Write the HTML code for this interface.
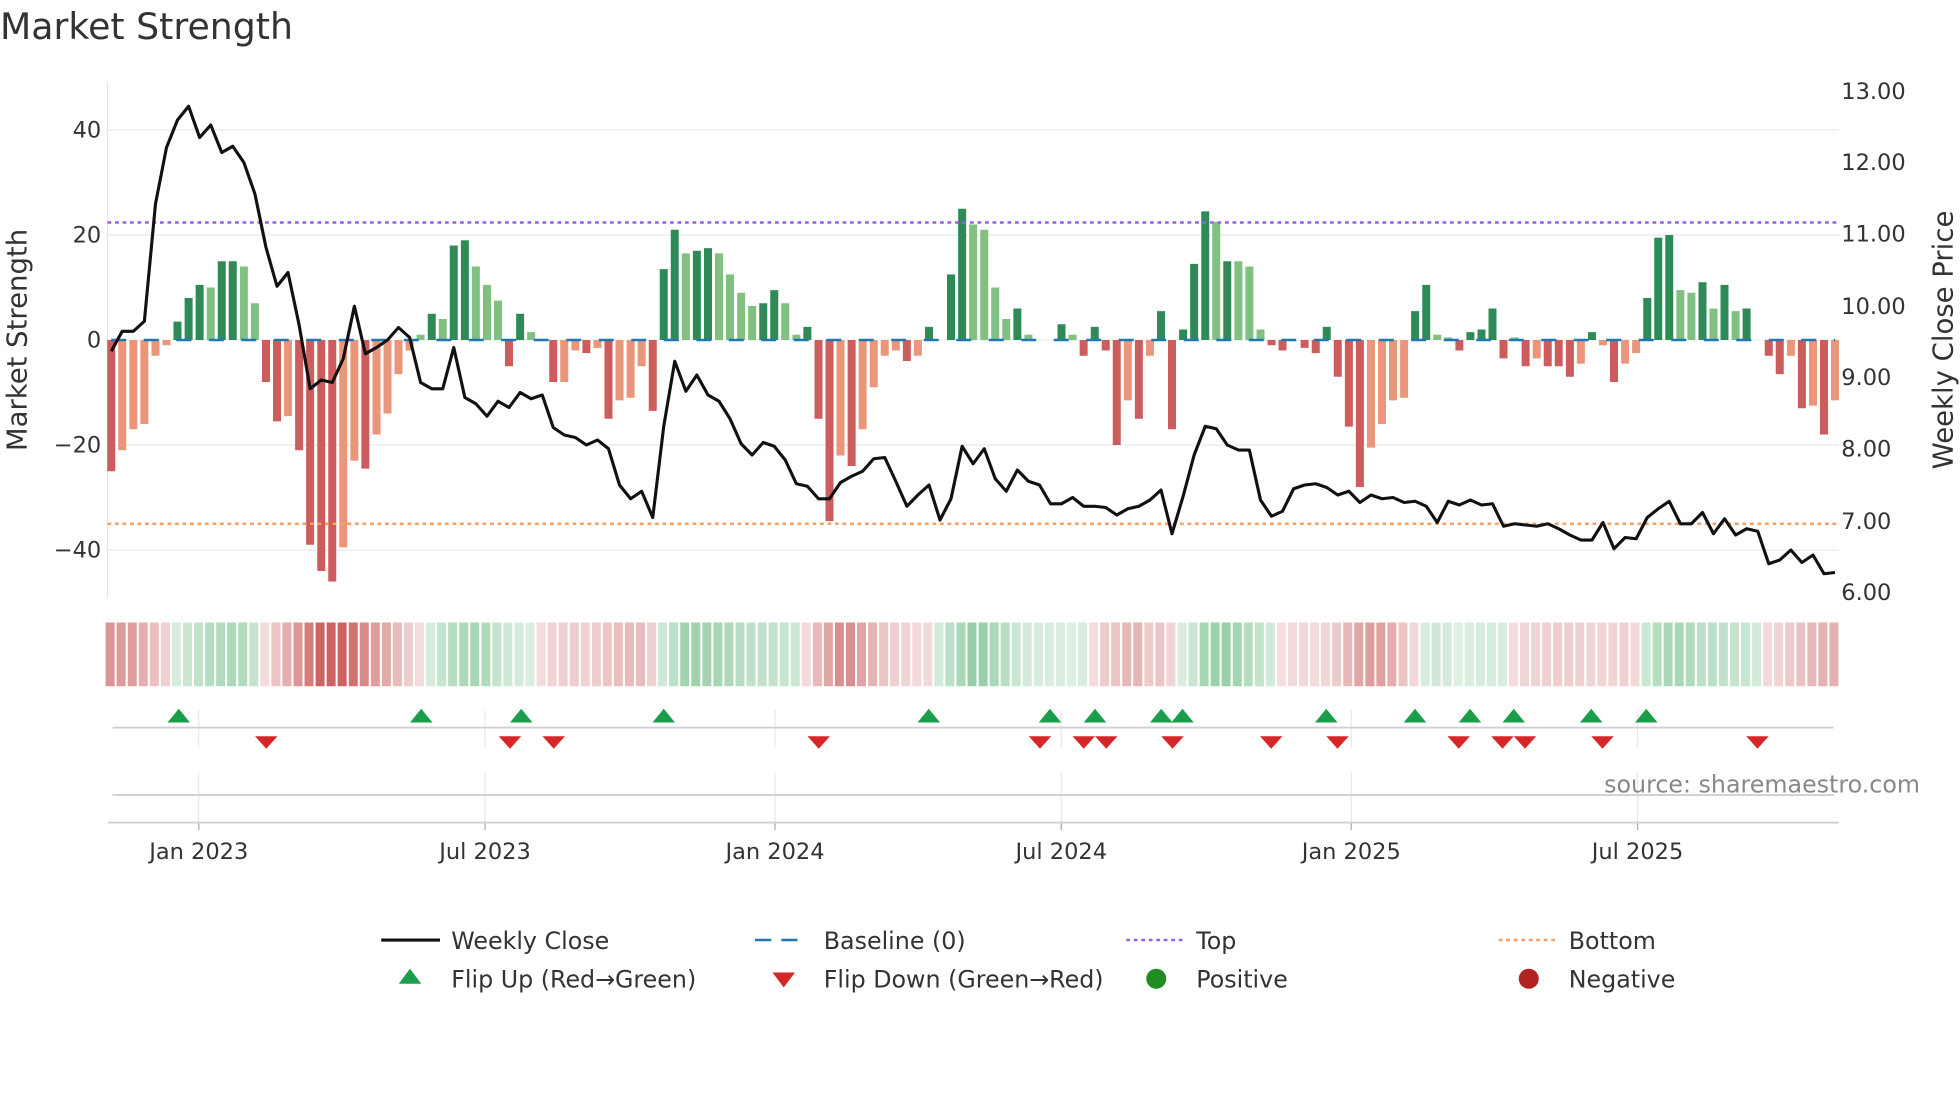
<!DOCTYPE html>
<html><head><meta charset="utf-8"><style>
html,body{margin:0;padding:0;background:#fff;}
svg{display:block;font-family:"DejaVu Sans","Liberation Sans",sans-serif;}
</style></head><body>
<svg id="s" width="1960" height="1102" viewBox="0 0 1568 881.6" xmlns="http://www.w3.org/2000/svg">
<rect width="1568" height="882" fill="#fff"/>
<g id="g"></g>
<text x="0" y="31" font-size="29" fill="#333">Market Strength</text>
<g font-size="18" fill="#333">
<text x="81" y="110" text-anchor="end">40</text>
<text x="81" y="194" text-anchor="end">20</text>
<text x="81" y="278" text-anchor="end">0</text>
<text x="81" y="362" text-anchor="end">−20</text>
<text x="81" y="446" text-anchor="end">−40</text>
<text x="1473" y="79">13.00</text>
<text x="1473" y="136">12.00</text>
<text x="1473" y="193">11.00</text>
<text x="1473" y="251">10.00</text>
<text x="1473" y="308">9.00</text>
<text x="1473" y="365">8.00</text>
<text x="1473" y="423">7.00</text>
<text x="1473" y="480">6.00</text>
<text x="159" y="687" text-anchor="middle">Jan 2023</text>
<text x="388" y="687" text-anchor="middle">Jul 2023</text>
<text x="620" y="687" text-anchor="middle">Jan 2024</text>
<text x="849" y="687" text-anchor="middle">Jul 2024</text>
<text x="1081" y="687" text-anchor="middle">Jan 2025</text>
<text x="1310" y="687" text-anchor="middle">Jul 2025</text>
</g>
<text transform="translate(21,272) rotate(-90)" font-size="22" fill="#333" text-anchor="middle">Market Strength</text>
<text transform="translate(1562,272) rotate(-90)" font-size="22" fill="#333" text-anchor="middle">Weekly Close Price</text>
<text x="1536" y="634" font-size="19" fill="#888" text-anchor="end">source: sharemaestro.com</text>
<g font-size="19" fill="#333">
<line x1="305" y1="752" x2="352" y2="752" stroke="#111" stroke-width="2.5"/>
<text x="361" y="759">Weekly Close</text>
<line x1="604" y1="752" x2="646" y2="752" stroke="#1f77b4" stroke-width="2" stroke-dasharray="13,8"/>
<text x="659" y="759">Baseline (0)</text>
<line x1="901" y1="752" x2="946" y2="752" stroke="#9b5de5" stroke-width="2" stroke-dasharray="3,3"/>
<text x="957" y="759">Top</text>
<line x1="1199" y1="752" x2="1244" y2="752" stroke="#f4a261" stroke-width="2" stroke-dasharray="3,3"/>
<text x="1255" y="759">Bottom</text>
<path d="M319,787 L337,787 L328,775 Z" fill="#1a9e4a"/>
<text x="361" y="790">Flip Up (Red→Green)</text>
<path d="M618,778 L636,778 L627,790 Z" fill="#d62728"/>
<text x="659" y="790">Flip Down (Green→Red)</text>
<circle cx="925" cy="783" r="8" fill="#228b22"/>
<text x="957" y="790">Positive</text>
<circle cx="1223" cy="783" r="8" fill="#b22222"/>
<text x="1255" y="790">Negative</text>
</g>
</svg>
<script>
var v=[-25,-21,-17,-16,-3,-1,3.5,8,10.5,10,15,15,14,7,-8,-15.5,-14.5,-21,-39,-44,-46,-39.5,-23,-24.5,-18,-14,-6.5,-2,1,5,4,18,19,14,10.5,7.5,-5,5,1.5,0,-8,-8,-2,-2.5,-1.5,-15,-11.5,-11,-5,-13.5,13.5,21,16.5,17,17.5,16.5,12.5,9,6.5,7,9.5,7,1,2.5,-15,-34.5,-22,-24,-17,-9,-3,-2,-4,-3,2.5,0,12.5,25,22,21,10,4,6,1,0,0,3,1,-3,2.5,-2,-20,-11.5,-15,-3,5.5,-17,2,14.5,24.5,22.5,15,15,14,2,-1,-2,0,-1.5,-2.5,2.5,-7,-16.5,-28,-20.5,-16,-11.5,-11,5.5,10.5,1,0.5,-2,1.5,2,6,-3.5,0.5,-5,-3.5,-5,-5,-7,-4.5,1.5,-1,-8,-4.5,-2.5,8,19.5,20,9.5,9,11,6,10.5,5.5,6,0,-3,-6.5,-3,-13,-12.5,-18,-11.5];
var dk={};[0,6,7,8,10,11,14,15,17,18,19,20,23,29,31,32,36,37,40,43,45,49,50,51,53,54,59,60,63,64,65,67,72,74,76,77,82,86,88,89,90,91,93,95,96,97,98,99,101,105,106,108,109,110,111,112,113,118,119,122,123,124,125,126,128,130,131,132,134,136,139,140,141,144,146,148,150,151,153,155].forEach(function(i){dk[i]=1});
var p=[281,265,265,257,163,118,96,85,110,100,122,117,130,155,198,229,218,260,311,304,306,287,245,283,278,272,262,270,306,311,311,278,318,323,333,321,326,314,319,316,342,348,350,356,352,359,388,399,393,414,341,289,313,300,316,321,335,355,364,354,357,368,387,389,399,399,386,381,377,367,366,385,405,396,388,416,399,357,371,359,383,393,376,385,388,403,403,398,405,405,406,412,407,405,400,392,427,397,364,341,343,356,360,360,400,413,409,391,388,387,390,396,393,402,396,399,398,402,401,405,418,401,404,400,404,403,421,419,420,421,419,423,428,432,432,418,439,430,431,414,407,401,419,419,410,427,415,428,423,425,451,448,440,450,444,459,458];
var h='';var W=8.84,X0=89;
[104,188,356,440].forEach(function(y){h+='<line x1="86" x2="1471" y1="'+y+'" y2="'+y+'" stroke="#eef0f3" stroke-width="1.5"/>';});
h+='<line x1="86" x2="86" y1="65" y2="478" stroke="#e6e6e6" stroke-width="1"/>';
h+='<line x1="86" x2="1471" y1="272" y2="272" stroke="#e8f3ec" stroke-width="1"/>';
for(var i=0;i<v.length;i++){var x=X0+i*W,y=272-v[i]*4.2,c;
 if(v[i]>=0)c=dk[i]?'#2e8b57':'#80c080';else c=dk[i]?'#cd5c5c':'#e9967a';
 if(v[i]!=0)h+='<rect x="'+(x-3.2).toFixed(1)+'" width="6.4" y="'+Math.min(y,272).toFixed(1)+'" height="'+Math.abs(272-y).toFixed(1)+'" fill="'+c+'"/>';}
h+='<line x1="89" x2="1468" y1="272" y2="272" stroke="#1f77b4" stroke-width="2" stroke-dasharray="12,14"/>';
h+='<line x1="86" x2="1471" y1="178" y2="178" stroke="#9b5de5" stroke-width="2" stroke-dasharray="3,3"/>';
h+='<line x1="86" x2="1471" y1="419" y2="419" stroke="#f4a261" stroke-width="2" stroke-dasharray="3,3"/>';
var d='';for(i=0;i<p.length;i++){d+=(i?'L':'M')+(X0+i*W).toFixed(1)+','+p[i];}
h+='<path d="'+d+'" fill="none" stroke="#111" stroke-width="2.5" stroke-linejoin="round"/>';
for(i=0;i<v.length;i++){var s=0,n=0;for(var k=i-2;k<=i+1;k++){if(k>=0&&k<v.length){s+=v[k];n++;}}s/=n;
 var a=Math.min(0.85,0.18+Math.abs(s)/40*0.7);var col=s>=0?'rgba(60,165,90,'+a.toFixed(2)+')':'rgba(195,70,70,'+a.toFixed(2)+')';
 h+='<rect x="'+(X0+i*W-4.5).toFixed(1)+'" y="498" width="7.2" height="51" fill="'+col+'"/>';}
[159,388,620,849,1081,1310].forEach(function(x){h+='<line x1="'+x+'" x2="'+x+'" y1="568" y2="598" stroke="#e6e8ee"/><line x1="'+x+'" x2="'+x+'" y1="618" y2="658" stroke="#e6e8ee"/><line x1="'+x+'" x2="'+x+'" y1="658" y2="664" stroke="#aaa"/>';});
h+='<line x1="90" x2="1467" y1="582" y2="582" stroke="#d0d0d4" stroke-width="1.5"/>';
h+='<line x1="90" x2="1467" y1="636" y2="636" stroke="#d0d0d4" stroke-width="1.5"/>';
h+='<line x1="86" x2="1471" y1="658" y2="658" stroke="#d0d0d4" stroke-width="1.5"/>';
[143,337,417,531,743,840,876,929,946,1061,1132,1176,1211,1273,1317].forEach(function(x){h+='<path d="M'+(x-9)+',578 L'+(x+9)+',578 L'+x+',567 Z" fill="#1a9e4a"/>';});
[213,408,443,655,832,867,885,938,1017,1070,1167,1202,1220,1282,1406].forEach(function(x){h+='<path d="M'+(x-9)+',589 L'+(x+9)+',589 L'+x+',599 Z" fill="#d62728"/>';});
document.getElementById('g').innerHTML=h;
</script>
</body></html>
